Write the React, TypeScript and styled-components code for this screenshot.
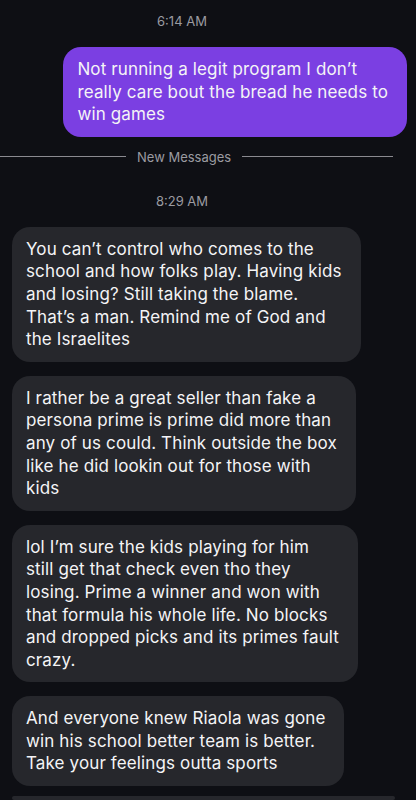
import React from "react";
import styled, { createGlobalStyle } from "styled-components";

const GlobalStyle = createGlobalStyle`
	html, body {
		margin: 0;
		padding: 0;
		background: #0e0f14;
	}
	body {
		font-family: Inter, "Noto Sans", "Liberation Sans", sans-serif;
		-webkit-font-smoothing: antialiased;
	}
`;

const Screen = styled.div`
	width: 416px;
	height: 800px;
	overflow: hidden;
	background: #0e0f14;
	display: flex;
	flex-direction: column;
`;

const Stamp = styled.div<{ $top: number; $bottom: number }>`
	width: 364px;
	text-align: center;
	color: #9b9ba1;
	font-size: 13px;
	line-height: 16px;
	margin: ${(p) => `${p.$top}px 0 ${p.$bottom}px`};
`;

const Divider = styled.div`
	display: flex;
	align-items: center;
	gap: 11px;
	margin: 12px 23px 28px 0;
	color: #9b9ba1;
	font-size: 13px;
	line-height: 16px;
`;

const Rule = styled.div<{ $fixed?: boolean }>`
	height: 1px;
	background: #8a8a90;
	flex: ${(p) => (p.$fixed ? "0 0 126px" : "1 1 auto")};
`;

const Row = styled.div<{ $mine?: boolean }>`
	display: flex;
	justify-content: ${(p) => (p.$mine ? "flex-end" : "flex-start")};
	padding: ${(p) => (p.$mine ? "0 9px 0 0" : "0 0 0 12px")};
	margin-bottom: ${(p) => (p.$mine ? 0 : 14)}px;
`;

const Bubble = styled.div<{ $mine?: boolean }>`
	background: ${(p) => (p.$mine ? "#7b3fe2" : "#26272c")};
	color: #f4f4f6;
	border-radius: 18px;
	padding: 11px 19px 11px 14px;
	font-size: 17px;
	line-height: 22.6px;
	letter-spacing: 0.13px;
	white-space: pre-line;
	box-sizing: border-box;
`;

const Peek = styled.div`
	margin: -4px 21px 0 12px;
	height: 40px;
	border-radius: 18px;
	background: #26272c;
`;

const incoming = [
	"You can\u2019t control who comes to the\nschool and how folks play. Having kids\nand losing? Still taking the blame.\nThat\u2019s a man. Remind me of God and\nthe Israelites",
	"I rather be a great seller than fake a\npersona prime is prime did more than\nany of us could. Think outside the box\nlike he did lookin out for those with\nkids",
	"lol I\u2019m sure the kids playing for him\nstill get that check even tho they\nlosing. Prime a winner and won with\nthat formula his whole life. No blocks\nand dropped picks and its primes fault\ncrazy.",
	"And everyone knew Riaola was gone\nwin his school better team is better.\nTake your feelings outta sports",
];

export default function App() {
	return (
		<Screen>
			<GlobalStyle />
			<Stamp $top={13} $bottom={18}>6:14 AM</Stamp>
			<Row $mine>
				<Bubble $mine>
					{"Not running a legit program I don\u2019t\nreally care bout the bread he needs to\nwin games"}
				</Bubble>
			</Row>
			<Divider>
				<Rule $fixed />
				<span>New Messages</span>
				<Rule />
			</Divider>
			<Stamp $top={0} $bottom={18}>8:29 AM</Stamp>
			{incoming.map((text) => (
				<Row key={text}>
					<Bubble>{text}</Bubble>
				</Row>
			))}
			<Peek />
		</Screen>
	);
}
